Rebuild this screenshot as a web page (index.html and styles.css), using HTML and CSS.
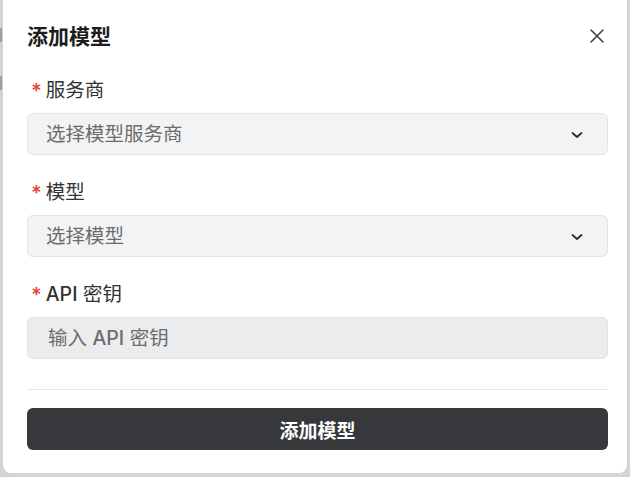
FILE: index.html
```html
<!DOCTYPE html>
<html lang="zh-CN">
<head>
<meta charset="utf-8">
<title>添加模型</title>
<link rel="stylesheet" href="styles.css">
</head>
<body>
<div class="backdrop">
  <div class="edge">
    <span class="edge-mark m1"></span>
    <span class="edge-mark m2"></span>
  </div>
  <div class="modal">
    <div class="modal-head">
      <h2 class="modal-title">添加模型</h2>
      <button class="close-btn" aria-label="关闭">
        <svg width="16" height="16" viewBox="0 0 16 16"><path d="M2 2 L14 14 M14 2 L2 14" stroke="#3a3a3a" stroke-width="1.5" stroke-linecap="round" fill="none"/></svg>
      </button>
    </div>
    <div class="field">
      <label class="label"><span class="req">*</span>服务商</label>
      <div class="select"><span class="placeholder">选择模型服务商</span>
        <svg class="chev" width="12" height="8" viewBox="0 0 12 8"><path d="M1.5 2 L6 6 L10.5 2" stroke="#2e2e2e" stroke-width="1.8" fill="none" stroke-linecap="round" stroke-linejoin="round"/></svg>
      </div>
    </div>
    <div class="field">
      <label class="label"><span class="req">*</span>模型</label>
      <div class="select"><span class="placeholder">选择模型</span>
        <svg class="chev" width="12" height="8" viewBox="0 0 12 8"><path d="M1.5 2 L6 6 L10.5 2" stroke="#2e2e2e" stroke-width="1.8" fill="none" stroke-linecap="round" stroke-linejoin="round"/></svg>
      </div>
    </div>
    <div class="field field-last">
      <label class="label"><span class="req">*</span><span class="latin">API</span> 密钥</label>
      <div class="input"><span class="placeholder">输入 <span class="latin">API</span> 密钥</span></div>
    </div>
    <div class="divider"></div>
    <button class="submit">添加模型</button>
  </div>
</div>
</body>
</html>
```
FILE: styles.css
```css
* { box-sizing: border-box; }
html, body { margin: 0; padding: 0; }
body {
  width: 630px;
  height: 477px;
  overflow: hidden;
  background: #d2d4d7;
  font-family: "Inter", "Noto Sans CJK SC", sans-serif;
}
.backdrop {
  display: flex;
  align-items: flex-start;
  height: 477px;
}
.edge {
  width: 3px;
  height: 477px;
  position: relative;
  flex: none;
}
.edge-mark {
  position: absolute;
  left: 0;
  width: 2px;
  background: #9c9ea2;
}
.m1 { top: 28px; height: 14px; }
.m2 { top: 76px; height: 14px; }
.modal {
  flex: none;
  width: 624px;
  height: 473px;
  background: #ffffff;
  border-radius: 0 0 8px 8px;
  padding: 23px 19px 24px 24px;
  display: flex;
  flex-direction: column;
}
.modal > * { flex: none; }
.modal-head {
  display: flex;
  align-items: center;
  justify-content: space-between;
  height: 28px;
  margin-bottom: 27px;
}
.modal-title {
  margin: 0;
  font-size: 21px;
  line-height: 28px;
  font-weight: 700;
  color: #1c1c1c;
}
.close-btn {
  background: none;
  border: 0;
  padding: 0;
  width: 16px;
  height: 16px;
  margin-right: 3px;
  margin-top: -2px;
  display: flex;
}
.field {
  display: flex;
  flex-direction: column;
  margin-bottom: 25px;
}
.field-last { margin-bottom: 0; }
.label {
  display: block;
  font-size: 19.5px;
  line-height: 24px;
  height: 24px;
  color: #333333;
  margin-bottom: 11px;
  padding-left: 4px;
  white-space: pre;
}
.latin { font-weight: 500; }
.req {
  color: #e8453c;
  font-size: 20px;
  font-weight: 600;
  margin-right: 4px;
  position: relative;
  top: 1px;
}
.select, .input {
  flex: none;
  height: 42px;
  border: 1px solid #e2e4e7;
  border-radius: 6px;
  background: #f2f3f5;
  display: flex;
  align-items: center;
  justify-content: space-between;
  padding: 0 24px 0 18px;
}
.input {
  background: #ebecee;
  padding-left: 20px;
}
.placeholder {
  font-size: 19.5px;
  color: #6c6c6c;
  line-height: 24px;
  white-space: pre;
}
.chev { margin-top: 1px; }
.divider {
  height: 1px;
  background: #e4e5e7;
  margin-top: 30px;
  margin-bottom: 18px;
}
.submit {
  height: 42px;
  border: 0;
  border-radius: 6px;
  background: #36383c;
  color: #ffffff;
  font-family: "Inter", "Noto Sans CJK SC", sans-serif;
  font-size: 19px;
  font-weight: 700;
  width: 100%;
}
```
